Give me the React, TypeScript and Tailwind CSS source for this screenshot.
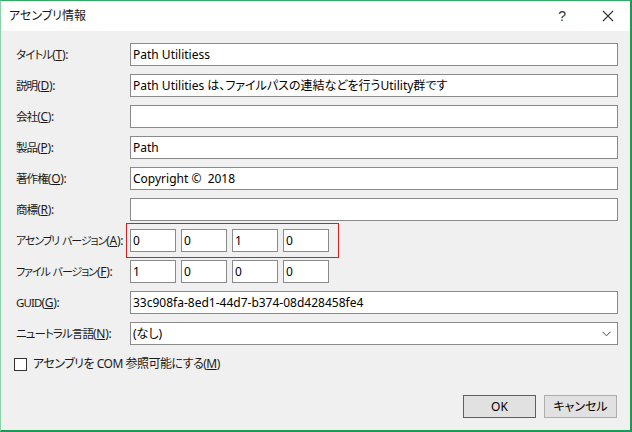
import React from 'react';

const font = "font-['Noto_Sans','Noto_Sans_CJK_JP',sans-serif] [font-feature-settings:'palt']";

function Label({ text, mn, tight }: { text: string; mn: string; tight?: boolean }) {
  const parts = text.split(' ');
  return (
    <div className="w-[114px] shrink-0 whitespace-pre text-[12px] text-[#1a1a1a]">
      {parts.map((p, i) => (
        <span
          key={i}
          className={`${tight ? 'text-[11px] tracking-[-1.1px]' : 'text-[11.5px] tracking-[-0.9px]'} ${i > 0 ? 'ml-[3px]' : ''}`}
        >
          {p}
        </span>
      ))}
      <span className="tracking-[-0.3px]">
        (<span className="underline">{mn}</span>):
      </span>
    </div>
  );
}

function TextBox({
  value,
  className = '',
  children,
}: {
  value?: string;
  className?: string;
  children?: React.ReactNode;
}) {
  return (
    <div
      className={`flex h-[23px] items-center whitespace-pre border border-[#8a8a8a] bg-white px-[2px] text-[12px] text-black ${className}`}
    >
      {value}
      {children}
    </div>
  );
}

function VersionBoxes({ values, focus }: { values: string[]; focus?: number }) {
  return (
    <div className="flex gap-[5px]">
      {values.map((v, i) => (
        <TextBox
          key={i}
          value={v}
          className={`w-[46px] ${i === focus ? 'border-[#4f8fdc]' : ''}`}
        />
      ))}
    </div>
  );
}

export default function App() {
  const rows: { label: string; mn: string; value: string }[] = [
    { label: 'タイトル', mn: 'T', value: 'Path Utilitiess' },
    { label: '説明', mn: 'D', value: 'Path Utilities は、ファイルパスの連結などを行うUtility群です' },
    { label: '会社', mn: 'C', value: '' },
    { label: '製品', mn: 'P', value: 'Path' },
    { label: '著作権', mn: 'O', value: 'Copyright ©  2018' },
    { label: '商標', mn: 'R', value: '' },
  ];

  return (
    <div
      className={`flex h-[432px] w-[632px] flex-col overflow-hidden border-t border-l border-r-2 border-b-2 border-t-[#2fae62] border-l-[#86d6a5] border-r-[#1a9a52] border-b-[#1a9a52] ${font}`}
    >
      {/* title bar */}
      <div className="flex h-[30px] shrink-0 items-center bg-white pl-[8px] text-[12px] text-[#1a1a1a]">
        <span>アセンブリ情報</span>
        <span className="ml-auto mr-[36px] font-['Liberation_Sans',sans-serif] text-[14px] font-light text-[#333]">?</span>
        <svg width="12" height="12" viewBox="0 0 12 12" className="mr-[16px]">
          <path d="M1 1 L11 11 M11 1 L1 11" stroke="#333" strokeWidth="1.1" fill="none" />
        </svg>
      </div>

      {/* body */}
      <div className="flex flex-1 flex-col bg-[#f0f0f0] pt-[12px] pl-[15px] pr-[12px]">
        <div className="flex flex-col gap-[8px]">
          {rows.map((r) => (
            <div key={r.mn} className="flex items-center">
              <Label text={r.label} mn={r.mn} />
              <TextBox value={r.value} className="w-[488px]" />
            </div>
          ))}

          <div className="flex items-center">
            <Label text="アセンブリ バージョン" mn="A" tight />
            <div className="relative">
              <VersionBoxes values={['0', '0', '1', '0']} focus={2} />
              <div className="pointer-events-none absolute -left-[4px] -top-[6px] h-[35px] w-[213px] border border-[#e81818]" />
            </div>
          </div>

          <div className="flex items-center">
            <Label text="ファイル バージョン" mn="F" tight />
            <VersionBoxes values={['1', '0', '0', '0']} />
          </div>

          <div className="flex items-center">
            <Label text="GUID" mn="G" />
            <TextBox value="33c908fa-8ed1-44d7-b374-08d428458fe4" className="w-[488px]" />
          </div>

          <div className="flex items-center">
            <Label text="ニュートラル言語" mn="N" />
            <TextBox value="(なし)" className="w-[488px] justify-between pr-[6px]">
              <svg width="9" height="6" viewBox="0 0 9 6">
                <path d="M0.5 0.8 L4.5 4.8 L8.5 0.8" stroke="#444" strokeWidth="1" fill="none" />
              </svg>
            </TextBox>
          </div>
        </div>

        <div className="mt-[12px] flex h-[14px] items-center gap-[6px]">
          <div className="-ml-[2px] h-[13px] w-[13px] border border-[#333] bg-white" />
          <span className="text-[12px] tracking-[-0.5px] text-[#1a1a1a]">
            アセンブリを COM 参照可能にする(<span className="underline">M</span>)
          </span>
        </div>

        <div className="mt-[24px] flex justify-end gap-[8px] pr-[1px]">
          <button className="h-[23px] w-[73px] border border-[#0078d7] bg-[#e1e1e1] text-[12px] text-black">
            OK
          </button>
          <button className="h-[23px] w-[73px] border border-[#adadad] bg-[#e1e1e1] text-[12px] text-black">
            キャンセル
          </button>
        </div>
      </div>
    </div>
  );
}
